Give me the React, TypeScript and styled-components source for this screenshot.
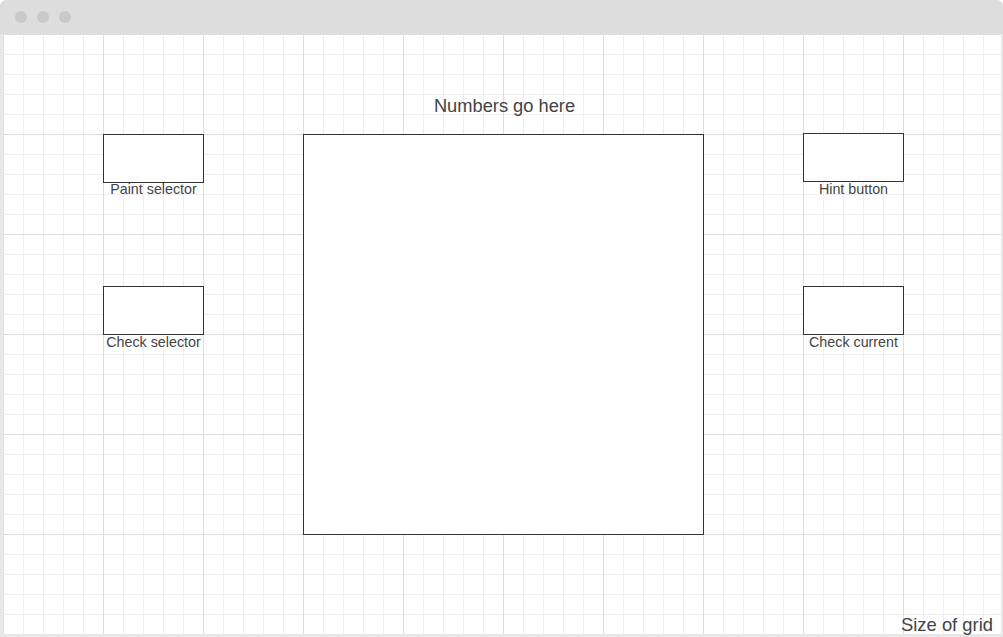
import React from "react";
import styled, { createGlobalStyle } from "styled-components";

const Global = createGlobalStyle`
  html, body { margin: 0; padding: 0; background: #ffffff; }
  body { font-family: "Liberation Sans", Arial, sans-serif; }
  * { box-sizing: border-box; }
`;

const Window = styled.div`
  width: 1003px;
  height: 637px;
  display: flex;
  flex-direction: column;
  background: #e8e8e8;
  border-radius: 6px 6px 0 0;
  overflow: hidden;
`;

const TitleBar = styled.div`
  height: 34px;
  flex: none;
  display: flex;
  align-items: center;
  gap: 10px;
  padding-left: 15px;
  background: #dddddd;
  border-radius: 6px 6px 0 0;
`;

const Dot = styled.span`
  width: 12px;
  height: 12px;
  border-radius: 50%;
  background: #c9c9c9;
`;

const Canvas = styled.div`
  flex: 1;
  margin: 0 2px 3px 3px;
  display: flex;
  flex-direction: column;
  background-color: #ffffff;
  background-image:
    linear-gradient(to right, #dedede 1px, transparent 1px),
    linear-gradient(to bottom, #dedede 1px, transparent 1px),
    linear-gradient(to right, #eeeeee 1px, transparent 1px),
    linear-gradient(to bottom, #eeeeee 1px, transparent 1px);
  background-size: 100px 100px, 100px 100px, 20px 20px, 20px 20px;
  color: #444444;
`;

const Layout = styled.div`
  display: grid;
  grid-template-columns: 101px 401px 101px;
  grid-template-rows: 100px auto;
  column-gap: 99px;
  padding-left: 100px;
`;

const Title = styled.div`
  grid-column: 2;
  grid-row: 1;
  align-self: end;
  padding-bottom: 19px;
  text-align: center;
  font-size: 18.3px;
  line-height: 18px;
  padding-left: 2px;
  white-space: nowrap;
`;

const Column = styled.div<{ $col: number }>`
  grid-column: ${(p) => p.$col};
  grid-row: 2;
  display: flex;
  flex-direction: column;
`;

const Widget = styled.div`
  height: 152px;
  display: flex;
  flex-direction: column;
  align-items: center;
`;

const Box = styled.div<{ $nudge?: number }>`
  width: 101px;
  height: 49px;
  margin-top: ${(p) => p.$nudge ?? 0}px;
  border: 1px solid #333333;
  background: #ffffff;
`;

const Label = styled.div<{ $shift?: number }>`
  font-size: 14.3px;
  line-height: 14px;
  margin-top: ${(p) => p.$shift ?? 0}px;
  white-space: nowrap;
  color: #444444;
`;

const Board = styled.div`
  grid-column: 2;
  grid-row: 2;
  width: 401px;
  height: 401px;
  border: 1px solid #333333;
  background: #ffffff;
`;

const Footer = styled.div`
  margin-top: auto;
  margin-bottom: 0;
  padding-right: 8px;
  text-align: right;
  font-size: 18.4px;
  line-height: 18px;
  color: #444444;
`;

export default function App() {
  return (
    <>
      <Global />
      <Window>
        <TitleBar>
          <Dot />
          <Dot />
          <Dot />
        </TitleBar>
        <Canvas>
          <Layout>
            <Title>Numbers go here</Title>
            <Column $col={1}>
              <Widget>
                <Box />
                <Label $shift={-1}>Paint selector</Label>
              </Widget>
              <Widget>
                <Box />
                <Label>Check selector</Label>
              </Widget>
            </Column>
            <Board />
            <Column $col={3}>
              <Widget>
                <Box $nudge={-1} />
                <Label>Hint button</Label>
              </Widget>
              <Widget>
                <Box />
                <Label>Check current</Label>
              </Widget>
            </Column>
          </Layout>
          <Footer>Size of grid</Footer>
        </Canvas>
      </Window>
    </>
  );
}
